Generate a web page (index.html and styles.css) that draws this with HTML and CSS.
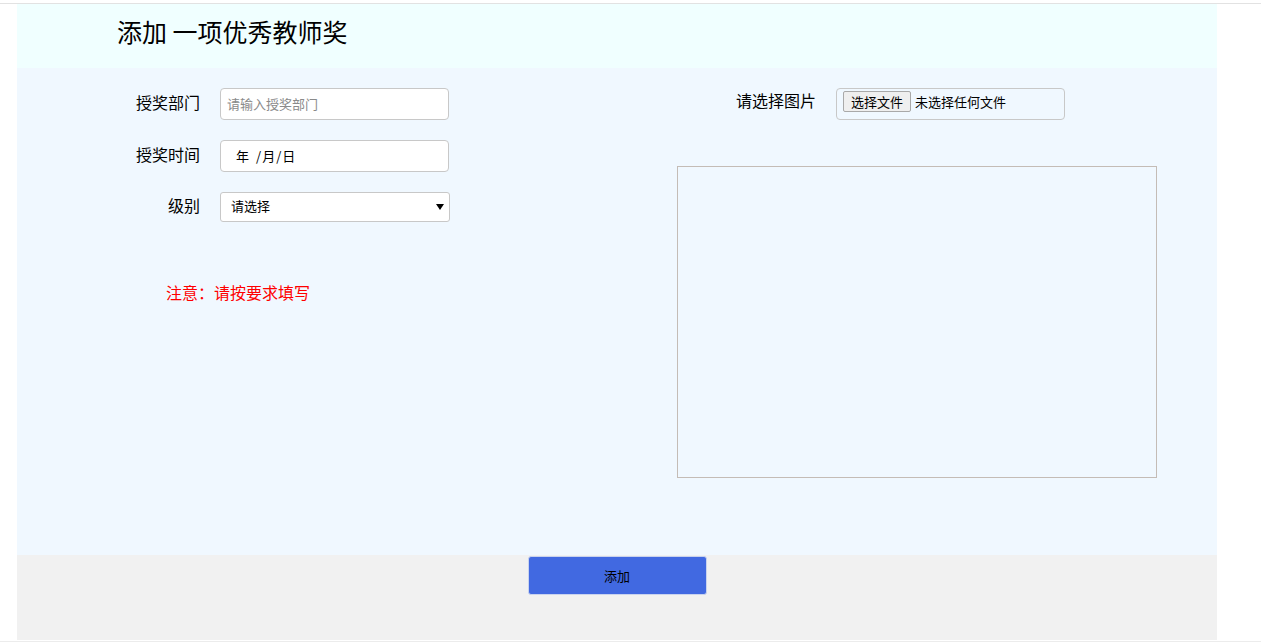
FILE: index.html
```html
<!DOCTYPE html>
<html lang="zh-CN">
<head>
<meta charset="utf-8">
<title>添加 一项优秀教师奖</title>
<link rel="stylesheet" href="styles.css">
</head>
<body>
<div class="page">
  <div class="wrap">
    <header class="head">
      <h1 class="title">添加 一项优秀教师奖</h1>
    </header>
    <main class="main">
      <section class="left">
        <div class="row">
          <label class="lbl">授奖部门</label>
          <input class="field" type="text" placeholder="请输入授奖部门">
        </div>
        <div class="row">
          <label class="lbl">授奖时间</label>
          <div class="field date"><span>年</span><span class="sl">/</span><span>月</span><span class="sl2">/</span><span>日</span></div>
        </div>
        <div class="row">
          <label class="lbl">级别</label>
          <div class="selectbox">
            <select class="select"><option>请选择</option></select>
            <svg class="arrow" width="8" height="6" viewBox="0 0 8 6"><path d="M0 0H8L4 6Z" fill="#000"/></svg>
          </div>
        </div>
        <p class="note">注意：请按要求填写</p>
      </section>
      <section class="right">
        <div class="row frow">
          <label class="lbl rlbl">请选择图片</label>
          <div class="filebox">
            <span class="filebtn">选择文件</span>
            <span class="filetxt">未选择任何文件</span>
          </div>
        </div>
        <div class="preview"></div>
      </section>
    </main>
    <footer class="foot">
      <button class="btn" type="button">添加</button>
    </footer>
  </div>
</div>
</body>
</html>
```
FILE: styles.css
```css
html, body {
  margin: 0;
  padding: 0;
  background: #fff;
}
body {
  font-family: "Noto Sans CJK SC", "Noto Sans", sans-serif;
  color: #000;
}
.page {
  margin-top: 3px;
  border-top: 1px solid #e2e2e2;
  border-bottom: 1px solid #ececec;
  height: 637px;
}
.wrap {
  width: 1200px;
  margin-left: 17px;
  display: flex;
  flex-direction: column;
}
.head {
  background: #f0ffff;
  height: 64px;
  padding-left: 100px;
  display: flex;
  align-items: center;
}
.title {
  margin: 0;
  font-size: 25px;
  font-weight: 400;
  line-height: 1;
  position: relative;
  top: -5px;
}
.main {
  background: #f0f8ff;
  height: 487px;
  display: flex;
}
.left {
  width: 660px;
  padding-top: 20px;
  display: flex;
  flex-direction: column;
  gap: 20px;
}
.row {
  display: flex;
  align-items: center;
  gap: 20px;
}
.lbl {
  width: 183px;
  text-align: right;
  font-size: 16px;
  line-height: 20px;
  position: relative;
  top: -2px;
}
.field {
  box-sizing: border-box;
  width: 229px;
  height: 32px;
  border: 1px solid #c8c8c8;
  border-radius: 4px;
  background: #fff;
  font-family: inherit;
  font-size: 13px;
  padding: 0 6px 2px;
  outline: none;
}
.field::placeholder {
  color: #8a8a8a;
}
.date {
  display: flex;
  align-items: center;
  padding-left: 15px;
  font-size: 13px;
}
.sl {
  margin: 0 1px 0 7px;
}
.sl2 {
  margin: 0 1px;
}
.selectbox {
  position: relative;
  width: 230px;
  height: 30px;
}
.select {
  -webkit-appearance: none;
  appearance: none;
  box-sizing: border-box;
  width: 230px;
  height: 30px;
  border: 1px solid #c8c8c8;
  border-radius: 3px;
  background: #fff;
  font-family: inherit;
  font-size: 13px;
  padding: 0 10px 3px;
  color: #000;
  outline: none;
}
.arrow {
  position: absolute;
  right: 6px;
  top: 12px;
  pointer-events: none;
}
.note {
  margin: 40px 0 0 149px;
  color: #ff0000;
  font-size: 16px;
  line-height: 20px;
}
.right {
  padding-top: 20px;
  display: flex;
  flex-direction: column;
}
.frow {
  gap: 20px;
}
.rlbl {
  width: 139px;
  top: -4px;
}
.filebox {
  box-sizing: border-box;
  width: 229px;
  height: 32px;
  border: 1px solid #c8c8c8;
  border-radius: 4px;
  display: flex;
  align-items: flex-start;
  padding: 2px 0 0 6px;
  font-size: 13px;
}
.filebtn {
  box-sizing: border-box;
  height: 21px;
  line-height: 19px;
  padding: 0 7px;
  border: 1px solid #a9a9a9;
  border-radius: 2px;
  background: #efefef;
}
.filetxt {
  margin-left: 4px;
  line-height: 21px;
}
.preview {
  margin-top: 46px;
  box-sizing: border-box;
  width: 480px;
  height: 312px;
  border: 1px solid #c4bcb6;
}
.foot {
  background: #f1f1f1;
  height: 85px;
  display: flex;
  justify-content: center;
  align-items: flex-start;
}
.btn {
  margin-top: 1px;
  width: 179px;
  height: 39px;
  background: #4169e1;
  border: 1px solid #c9d3ee;
  border-radius: 3px;
  font-family: inherit;
  font-size: 13px;
  color: #000;
}
```
